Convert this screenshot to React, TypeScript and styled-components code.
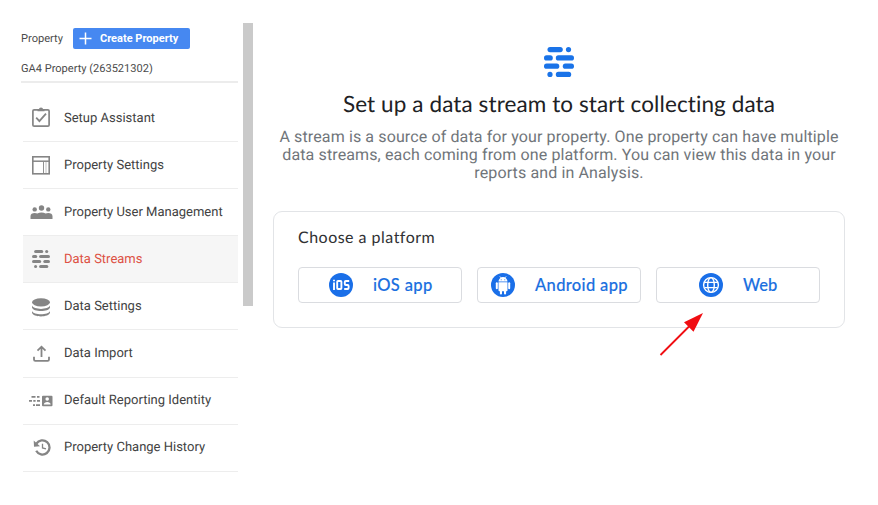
import React from "react";
import styled, { createGlobalStyle } from "styled-components";

const GlobalStyle = createGlobalStyle`
  * { box-sizing: border-box; }
  body {
    margin: 0;
    background: #fff;
    font-family: Roboto, sans-serif;
    font-variant-ligatures: none;
    text-rendering: geometricPrecision;
  }
`;

const Page = styled.div`
  display: flex;
  width: 878px;
  height: 505px;
  overflow: hidden;
  background: #fff;
`;

const Sidebar = styled.aside`
  width: 243px;
  padding: 28px 5px 0 21px;
`;

const Header = styled.div`
  display: flex;
  align-items: center;
  gap: 10px;
  height: 21px;
`;

const Label = styled.span`
  width: 42px;
  font-size: 11.1px;
  line-height: 13px;
  color: #4b4b4b;
  white-space: nowrap;
`;

const CreateButton = styled.button`
  display: flex;
  align-items: center;
  gap: 8px;
  width: 117px;
  height: 21px;
  padding: 0 0 0 6px;
  border: 0;
  border-radius: 2px;
  background: #4688f1;
  color: #fff;
  font: 700 11px Roboto, sans-serif;
  white-space: nowrap;
`;

const PropertyName = styled.div`
  height: 34px;
  padding-top: 12px;
  border-bottom: 2px solid #ececec;
  font-size: 11.05px;
  line-height: 15px;
  color: #4b4b4b;
  white-space: nowrap;
`;

const Menu = styled.nav`
  margin: 12px 0 0 2px;
`;

const Item = styled.div<{ $active?: boolean }>`
  display: flex;
  align-items: center;
  height: 47.1px;
  padding-left: 5px;
  border-bottom: 1px solid #ededed;
  background: ${(p) => (p.$active ? "#f6f6f6" : "transparent")};
  color: ${(p) => (p.$active ? "#dd5144" : "#424242")};
  font-size: 13px;
  white-space: nowrap;
`;

const IconSlot = styled.span`
  display: flex;
  flex: none;
  justify-content: center;
  width: 26px;
  margin-right: 10px;
  color: #858585;
`;

const Scrollbar = styled.div`
  flex: none;
  width: 10px;
  height: 283px;
  margin-top: 23px;
  background: #cacaca;
`;

const Main = styled.main`
  display: flex;
  flex: 1;
  flex-direction: column;
  align-items: center;
  padding: 47px 13px 0 0;
`;

const Hero = styled.h1`
  margin: 11px 0 0;
  font: 400 22.5px/32px Lato, sans-serif;
  letter-spacing: 0.1px;
  color: #202124;
  white-space: nowrap;
`;

const Lead = styled.p`
  margin: 8px 0 0;
  font-size: 16px;
  line-height: 18px;
  letter-spacing: 0.12px;
  color: #70757a;
  text-align: center;
  white-space: nowrap;
`;

const Line = styled.span`
  display: block;
`;

const Card = styled.section`
  position: relative;
  width: 572px;
  height: 117px;
  margin-top: 29px;
  padding: 15px 24px;
  border: 1px solid #e2e4e7;
  border-radius: 9px;
`;

const CardTitle = styled.h2`
  margin: 0;
  font: 400 16px/22px Lato, sans-serif;
  letter-spacing: 0.48px;
  color: #303134;
`;

const Platforms = styled.div`
  display: flex;
  gap: 15px;
  margin-top: 18px;
`;

const PlatformButton = styled.button<{ $shift: number; $spacing: number }>`
  display: flex;
  align-items: center;
  gap: 20px;
  width: 164px;
  height: 36px;
  padding: 0 0 0 ${(p) => p.$shift}px;
  border: 1px solid #dadce0;
  border-radius: 4px;
  background: #fff;
  color: #1a6fe0;
  font: 500 16.5px Lato, sans-serif;
  letter-spacing: ${(p) => p.$spacing}px;
  -webkit-text-stroke: 0.15px #1a6fe0;
  white-space: nowrap;
`;

const Pointer = styled.svg`
  position: absolute;
  left: 384px;
  top: 98px;
`;

const PlusIcon = () => (
  <svg width="13" height="13" viewBox="0 0 13 13" stroke="#fff" strokeWidth="1.5">
    <path d="M6.5 .5v12M.5 6.5h12" />
  </svg>
);

const StreamIcon = ({ size }: { size: number }) => (
  <svg width={size} height={size} viewBox="0 0 30 30" fill="currentColor">
    <rect x="3.5" y="0" width="15.3" height="5.2" rx="2.6" />
    <circle cx="24.5" cy="2.6" r="2.6" />
    <rect x="0" y="8.3" width="8.8" height="5.2" rx="2.6" />
    <rect x="11.8" y="8.3" width="18.2" height="5.2" rx="2.6" />
    <rect x="0" y="16.6" width="15.3" height="5.2" rx="2.6" />
    <rect x="18.8" y="16.6" width="11.2" height="5.2" rx="2.6" />
    <circle cx="6" cy="27.4" r="2.6" />
    <rect x="11.8" y="24.8" width="15.4" height="5.2" rx="2.6" />
  </svg>
);

const SetupIcon = () => (
  <svg width="18" height="22" viewBox="0 0 18 22" fill="none" stroke="currentColor">
    <rect x=".9" y="2.9" width="16.2" height="16.2" rx="1.2" strokeWidth="1.7" />
    <path d="M5.5 2.5h1.4a2.1 2.1 0 0 1 4.2 0h1.4v1.7h-7z" fill="currentColor" stroke="none" />
    <path d="M4.2 10.7l3.2 3.4 6.6-7.4" strokeWidth="1.8" />
  </svg>
);

const SettingsIcon = () => (
  <svg width="18" height="19" viewBox="0 0 18 19" fill="none" stroke="currentColor">
    <rect x=".8" y=".8" width="16.4" height="17" strokeWidth="1.6" />
    <path d="M1 5.2h16" strokeWidth="1.5" />
    <path d="M11.5 6v12" strokeWidth=".9" />
    <path d="M14 6v12" strokeWidth=".5" />
  </svg>
);

const UsersIcon = () => (
  <svg width="23" height="16" viewBox="0 0 23 16" fill="currentColor">
    <circle cx="4.7" cy="5.4" r="2.2" />
    <circle cx="11.5" cy="4" r="2.7" />
    <circle cx="18.3" cy="5.4" r="2.2" />
    <path d="M.5 15v-2.8C.5 10 2.3 9 4.7 9c1 0 2 .2 2.7.6 1.1-.6 2.5-1 4.1-1s3 .4 4.1 1c.7-.4 1.700-.6 2.700-.6 2.400 0 4.200 1 4.200 3.200V15z" />
  </svg>
);

const DatabaseIcon = () => (
  <svg width="18" height="17" viewBox="0 0 18 17" overflow="visible">
    <ellipse cx="9" cy="4.3" rx="9" ry="4.1" fill="currentColor" />
    <path d="M0 7.6C1.5 12 16.5 12 18 7.6v1.900C17 14.300 1 14.300 0 9.500zM0 12.900C1.500 17.300 16.500 17.300 18 12.900v1.900C17 19.600 1 19.600 0 14.800z" fill="currentColor" />
  </svg>
);

const ImportIcon = () => (
  <svg width="17" height="17" viewBox="0 0 17 17" fill="none" stroke="currentColor" strokeWidth="1.8">
    <path d="M8.500 12V2M4.500 5.700l4-4 4 4M1 11.800v2.700q0 1.300 1.300 1.300h12.400q1.300 0 1.300-1.300v-2.700" />
  </svg>
);

const IdentityIcon = () => (
  <svg width="24" height="12" viewBox="0 0 24 12" fill="currentColor">
    <path d="M2.500 1h4v1.700h-4zM8 1h2.500v1.700H8zM0 5.100h3v1.700H0zM4.300 5.100h2.300v1.700H4.300zM8 5.100h3v1.700H8zM4 9.200h2v1.700H4zM7 9.200h4v1.700H7z" />
    <path fillRule="evenodd" d="M14 .7h8.500q1 0 1 1v8.600q0 1-1 1H14q-1 0-1-1V1.700q0-1 1-1zm4.200 1.500a1.800 1.800 0 1 0 0 3.600 1.800 1.800 0 0 0 0-3.600zM14.800 9.500h6.900c0-3.500-6.900-3.500-6.900 0z" />
  </svg>
);

const HistoryIcon = () => (
  <svg width="18" height="18" viewBox="-1.5 0.5 18 18" fill="none" stroke="currentColor" overflow="visible">
    <path d="M2.900 5.200A7.100 7.100 0 1 1 2.700 12.300" strokeWidth="2.300" />
    <path d="M.2 2l.3 6.200 6-.4z" fill="currentColor" stroke="none" />
    <path d="M9 5.200v4.200l3.500 1" strokeWidth="1.300" />
  </svg>
);

const IosIcon = () => (
  <svg width="24" height="24" viewBox="0 0 24 24">
    <circle cx="12" cy="12" r="12" fill="#1a6fe8" />
    <g fill="none" stroke="#fff" strokeWidth="1.900">
      <path d="M5 9.500V17M5 6.800V8.300" />
      <rect x="8.200" y="8" width="4.200" height="8" rx=".8" />
      <path d="M20.200 8h-3.400q-1 0-1 1v2q0 1 1 1h1.800q1 0 1 1v2q0 1-1 1h-3.400" />
    </g>
  </svg>
);

const AndroidIcon = () => (
  <svg width="24" height="24" viewBox="0 0 24 24">
    <circle cx="12" cy="12" r="12" fill="#1a6fe8" />
    <g fill="#fff">
      <path d="M7.500 8.600a4.500 4.500 0 0 1 9 0zM7.500 9.300h9v8q0 .9-.9.900h-7.200q-.9 0-.9-.9z" />
      <rect x="4.800" y="9.300" width="2" height="7" rx="1" />
      <rect x="17.200" y="9.300" width="2" height="7" rx="1" />
      <rect x="8.900" y="16" width="2.100" height="5.400" rx="1" />
      <rect x="13" y="16" width="2.100" height="5.400" rx="1" />
    </g>
    <path d="M8.800 3.300l1.400 2M15.200 3.300l-1.400 2" stroke="#fff" strokeWidth=".7" />
    <circle cx="10.200" cy="6.800" r=".5" fill="#1a6fe8" />
    <circle cx="13.800" cy="6.800" r=".5" fill="#1a6fe8" />
  </svg>
);

const WebIcon = () => (
  <svg width="24" height="24" viewBox="0 0 24 24">
    <circle cx="12" cy="12" r="12" fill="#1a6fe8" />
    <g fill="none" stroke="#fff" strokeWidth="1.400">
      <circle cx="12" cy="12" r="7.400" />
      <ellipse cx="12" cy="12" rx="3.300" ry="7.400" />
      <path d="M5.500 9.400h13M5.500 14.600h13" />
    </g>
  </svg>
);

const BlueMark = styled.div`
  height: 30px;
  color: #1a73e8;
`;

const items = [
  { text: "Setup Assistant", icon: <SetupIcon /> },
  { text: "Property Settings", icon: <SettingsIcon /> },
  { text: "Property User Management", icon: <UsersIcon /> },
  { text: "Data Streams", icon: <StreamIcon size={18} />, active: true },
  { text: "Data Settings", icon: <DatabaseIcon /> },
  { text: "Data Import", icon: <ImportIcon /> },
  { text: "Default Reporting Identity", icon: <IdentityIcon /> },
  { text: "Property Change History", icon: <HistoryIcon /> },
];

export default function App() {
  return (
    <Page>
      <GlobalStyle />
      <Sidebar>
        <Header>
          <Label>Property</Label>
          <CreateButton><PlusIcon />Create Property</CreateButton>
        </Header>
        <PropertyName>GA4 Property (263521302)</PropertyName>
        <Menu>
          {items.map((item) => (
            <Item key={item.text} $active={item.active}>
              <IconSlot>{item.icon}</IconSlot>
              <span>{item.text}</span>
            </Item>
          ))}
        </Menu>
      </Sidebar>
      <Scrollbar />
      <Main>
        <BlueMark><StreamIcon size={30} /></BlueMark>
        <Hero>Set up a data stream to start collecting data</Hero>
        <Lead>
          <Line>A stream is a source of data for your property. One property can have multiple</Line>
          <Line>data streams, each coming from one platform. You can view this data in your</Line>
          <Line>reports and in Analysis.</Line>
        </Lead>
        <Card>
          <CardTitle>Choose a platform</CardTitle>
          <Platforms>
            <PlatformButton $shift={30} $spacing={0.35}><IosIcon />iOS app</PlatformButton>
            <PlatformButton $shift={13} $spacing={0.35}><AndroidIcon />Android app</PlatformButton>
            <PlatformButton $shift={42} $spacing={0}><WebIcon />Web</PlatformButton>
          </Platforms>
          <Pointer width="48" height="48" viewBox="0 0 48 48">
            <path d="M2.500 45L31 16.500" stroke="#f00d12" strokeWidth="1.800" />
            <path d="M45 3L26 12.300l9.500 9.500z" fill="#f00d12" />
          </Pointer>
        </Card>
      </Main>
    </Page>
  );
}
